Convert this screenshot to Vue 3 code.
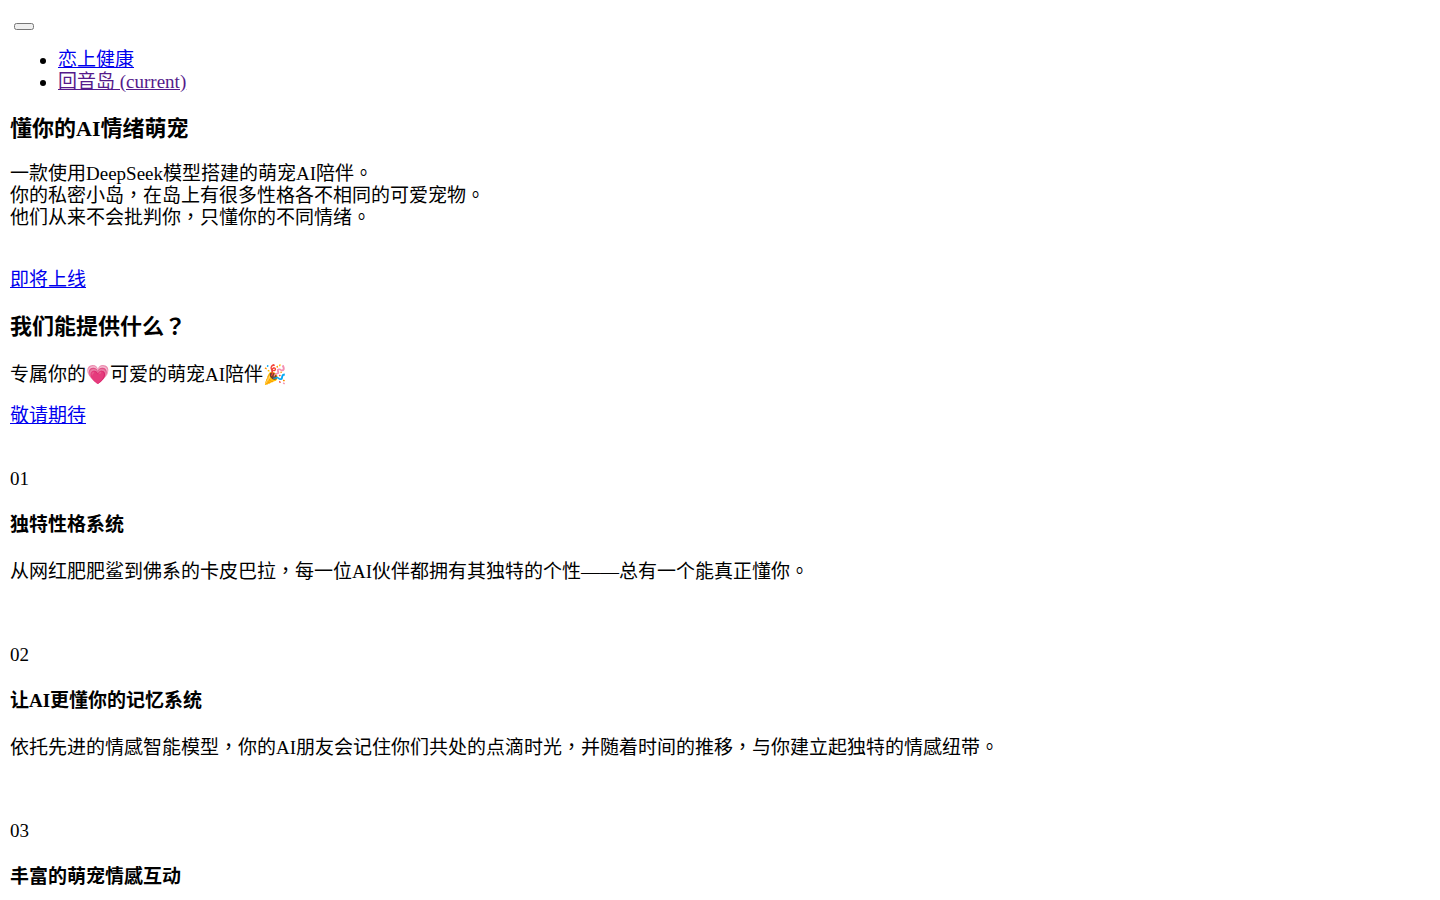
<template>
  <div class="page">
    <nav>
      <button type="button" class="toggle" aria-label="菜单"></button>
      <ul>
        <li><a href="#health">恋上健康</a></li>
        <li><a class="current" href="#island">回音岛 (current)</a></li>
      </ul>
    </nav>
    <h3>懂你的AI情绪萌宠</h3>
    <p>一款使用DeepSeek模型搭建的萌宠AI陪伴。<br>你的私密小岛，在岛上有很多性格各不相同的可爱宠物。<br>他们从来不会批判你，只懂你的不同情绪。</p>
    <a class="soon" href="#soon">即将上线</a>
    <h3>我们能提供什么？</h3>
    <p class="intro">专属你的💗可爱的萌宠AI陪伴🎉</p>
    <a class="wait" href="#wait">敬请期待</a>
    <section v-for="f in features" :key="f.no">
      <span>{{ f.no }}</span>
      <h4>{{ f.title }}</h4>
      <p v-if="f.text">{{ f.text }}</p>
    </section>
  </div>
</template>

<script setup>
const features = [
  { no: '01', title: '独特性格系统', text: '从网红肥肥鲨到佛系的卡皮巴拉，每一位AI伙伴都拥有其独特的个性——总有一个能真正懂你。' },
  { no: '02', title: '让AI更懂你的记忆系统', text: '依托先进的情感智能模型，你的AI朋友会记住你们共处的点滴时光，并随着时间的推移，与你建立起独特的情感纽带。' },
  { no: '03', title: '丰富的萌宠情感互动' },
]
</script>

<style>
body { background: #fff; }
</style>

<style scoped>
.page {
  height: 100vh;
  overflow: hidden;
  box-sizing: border-box;
  padding: 16px 10px 0;
  font-family: "Liberation Serif", "Noto Sans CJK TC", serif;
  font-size: 19px;
  line-height: 22px;
  color: #000;
}
nav { display: flow-root; }
.toggle { display: block; margin: 7px 4px 0; width: 20px; height: 7px; padding: 0; }
ul { margin: 19px 0 0; padding-left: 48px; }
a { color: #0000ee; }
a.current { color: #551a8b; }
h3 { margin: 24px 0 22px; font-size: 22px; line-height: 24px; }
h4 { margin: 24px 0 25px; font-size: 19px; line-height: 22px; }
p { margin: 0; }
.intro { margin-top: 24px; line-height: 24px; }
.soon, .wait { display: block; width: fit-content; }
.soon { margin-top: 40px; }
.wait { margin-top: 18px; }
section { margin-top: 41px; }
section + section { margin-top: 61px; }
section span { display: block; }
</style>
